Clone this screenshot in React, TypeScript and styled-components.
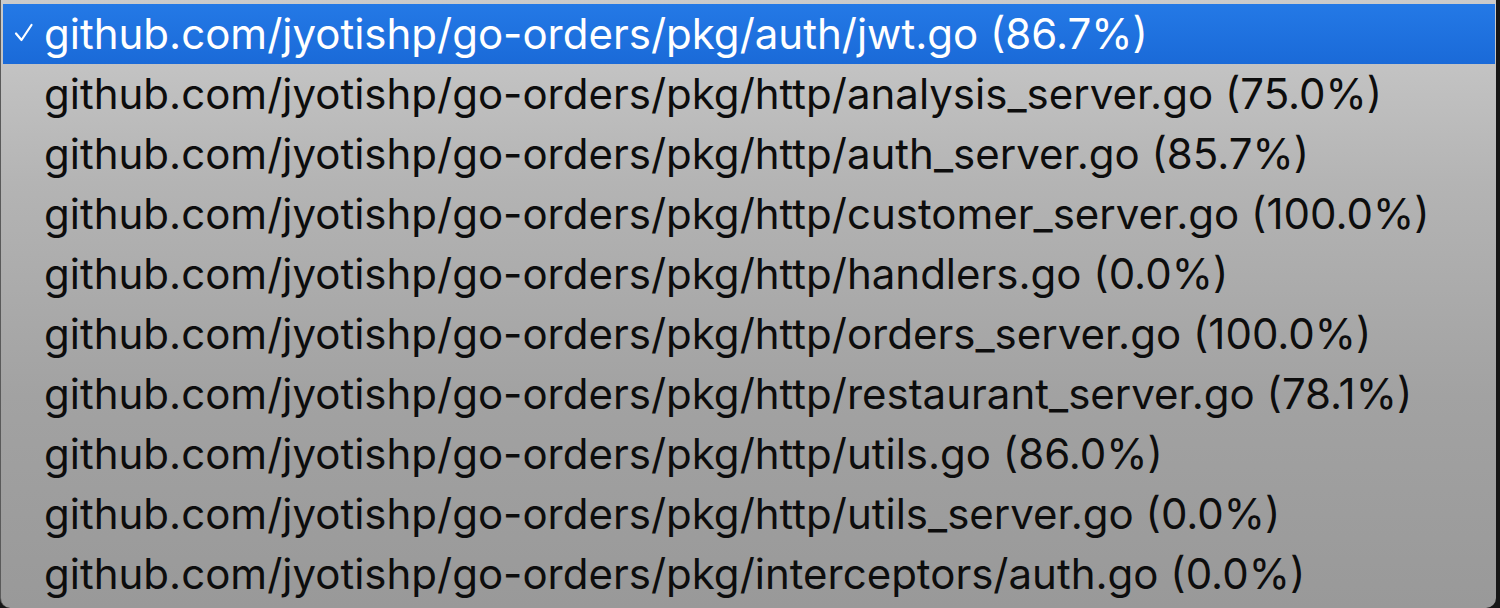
import styled, { createGlobalStyle } from 'styled-components';

type MenuEntry = {
    path: string;
    coverage: string;
};

const entries: MenuEntry[] = [
    { path: 'github.com/jyotishp/go-orders/pkg/auth/jwt.go', coverage: '86.7%' },
    { path: 'github.com/jyotishp/go-orders/pkg/http/analysis_server.go', coverage: '75.0%' },
    { path: 'github.com/jyotishp/go-orders/pkg/http/auth_server.go', coverage: '85.7%' },
    { path: 'github.com/jyotishp/go-orders/pkg/http/customer_server.go', coverage: '100.0%' },
    { path: 'github.com/jyotishp/go-orders/pkg/http/handlers.go', coverage: '0.0%' },
    { path: 'github.com/jyotishp/go-orders/pkg/http/orders_server.go', coverage: '100.0%' },
    { path: 'github.com/jyotishp/go-orders/pkg/http/restaurant_server.go', coverage: '78.1%' },
    { path: 'github.com/jyotishp/go-orders/pkg/http/utils.go', coverage: '86.0%' },
    { path: 'github.com/jyotishp/go-orders/pkg/http/utils_server.go', coverage: '0.0%' },
    { path: 'github.com/jyotishp/go-orders/pkg/interceptors/auth.go', coverage: '0.0%' },
];

const GlobalStyle = createGlobalStyle`
    html, body {
        margin: 0;
        padding: 0;
        background: #161616;
        width: 1500px;
        height: 608px;
        overflow: hidden;
    }
`;

const CheckIcon = () => (
    <svg width="20" height="20" viewBox="0 0 20 20">
        <path d="M2 10.5 L7.5 17 L17.5 2" fill="none" stroke="currentColor" strokeWidth="2.2" strokeLinecap="round" strokeLinejoin="round" />
    </svg>
);

const App = () => {
    const selected = 0;
    return (
        <>
            <GlobalStyle />
            <Menu>
                {entries.map((entry, index) => (
                    <MenuItem key={index} $selected={index === selected}>
                        <Check>{index === selected && <CheckIcon />}</Check>
                        <ItemLabel>
                            {entry.path} ({entry.coverage})
                        </ItemLabel>
                    </MenuItem>
                ))}
            </Menu>
        </>
    );
};

export default App;

const Menu = styled.div`
    width: 1496px;
    height: 608px;
    box-sizing: border-box;
    padding: 4px 1px 4px 2px;
    border-left: 1px solid #5a5a5a;
    border-radius: 0 0 10px 10px;
    background: linear-gradient(180deg, #cbcbcb 0%, #b4b4b4 30%, #a2a2a2 65%, #999999 100%);
    display: flex;
    flex-direction: column;
`;

const MenuItem = styled.div<{ $selected: boolean }>`
    height: 60px;
    flex-shrink: 0;
    display: flex;
    align-items: center;
    background: ${(p) => (p.$selected ? 'linear-gradient(180deg, #2479e6 0%, #1a6ad8 100%)' : 'transparent')};
    color: ${(p) => (p.$selected ? '#ffffff' : '#0d0d0d')};
`;

const Check = styled.span`
    width: 41px;
    padding-left: 11px;
    padding-bottom: 2px;
    box-sizing: border-box;
    display: flex;
    align-items: center;
`;

const ItemLabel = styled.span`
    font-family: Inter, 'Noto Sans', sans-serif;
    font-size: 42px;
    line-height: 1;
    white-space: nowrap;
`;
